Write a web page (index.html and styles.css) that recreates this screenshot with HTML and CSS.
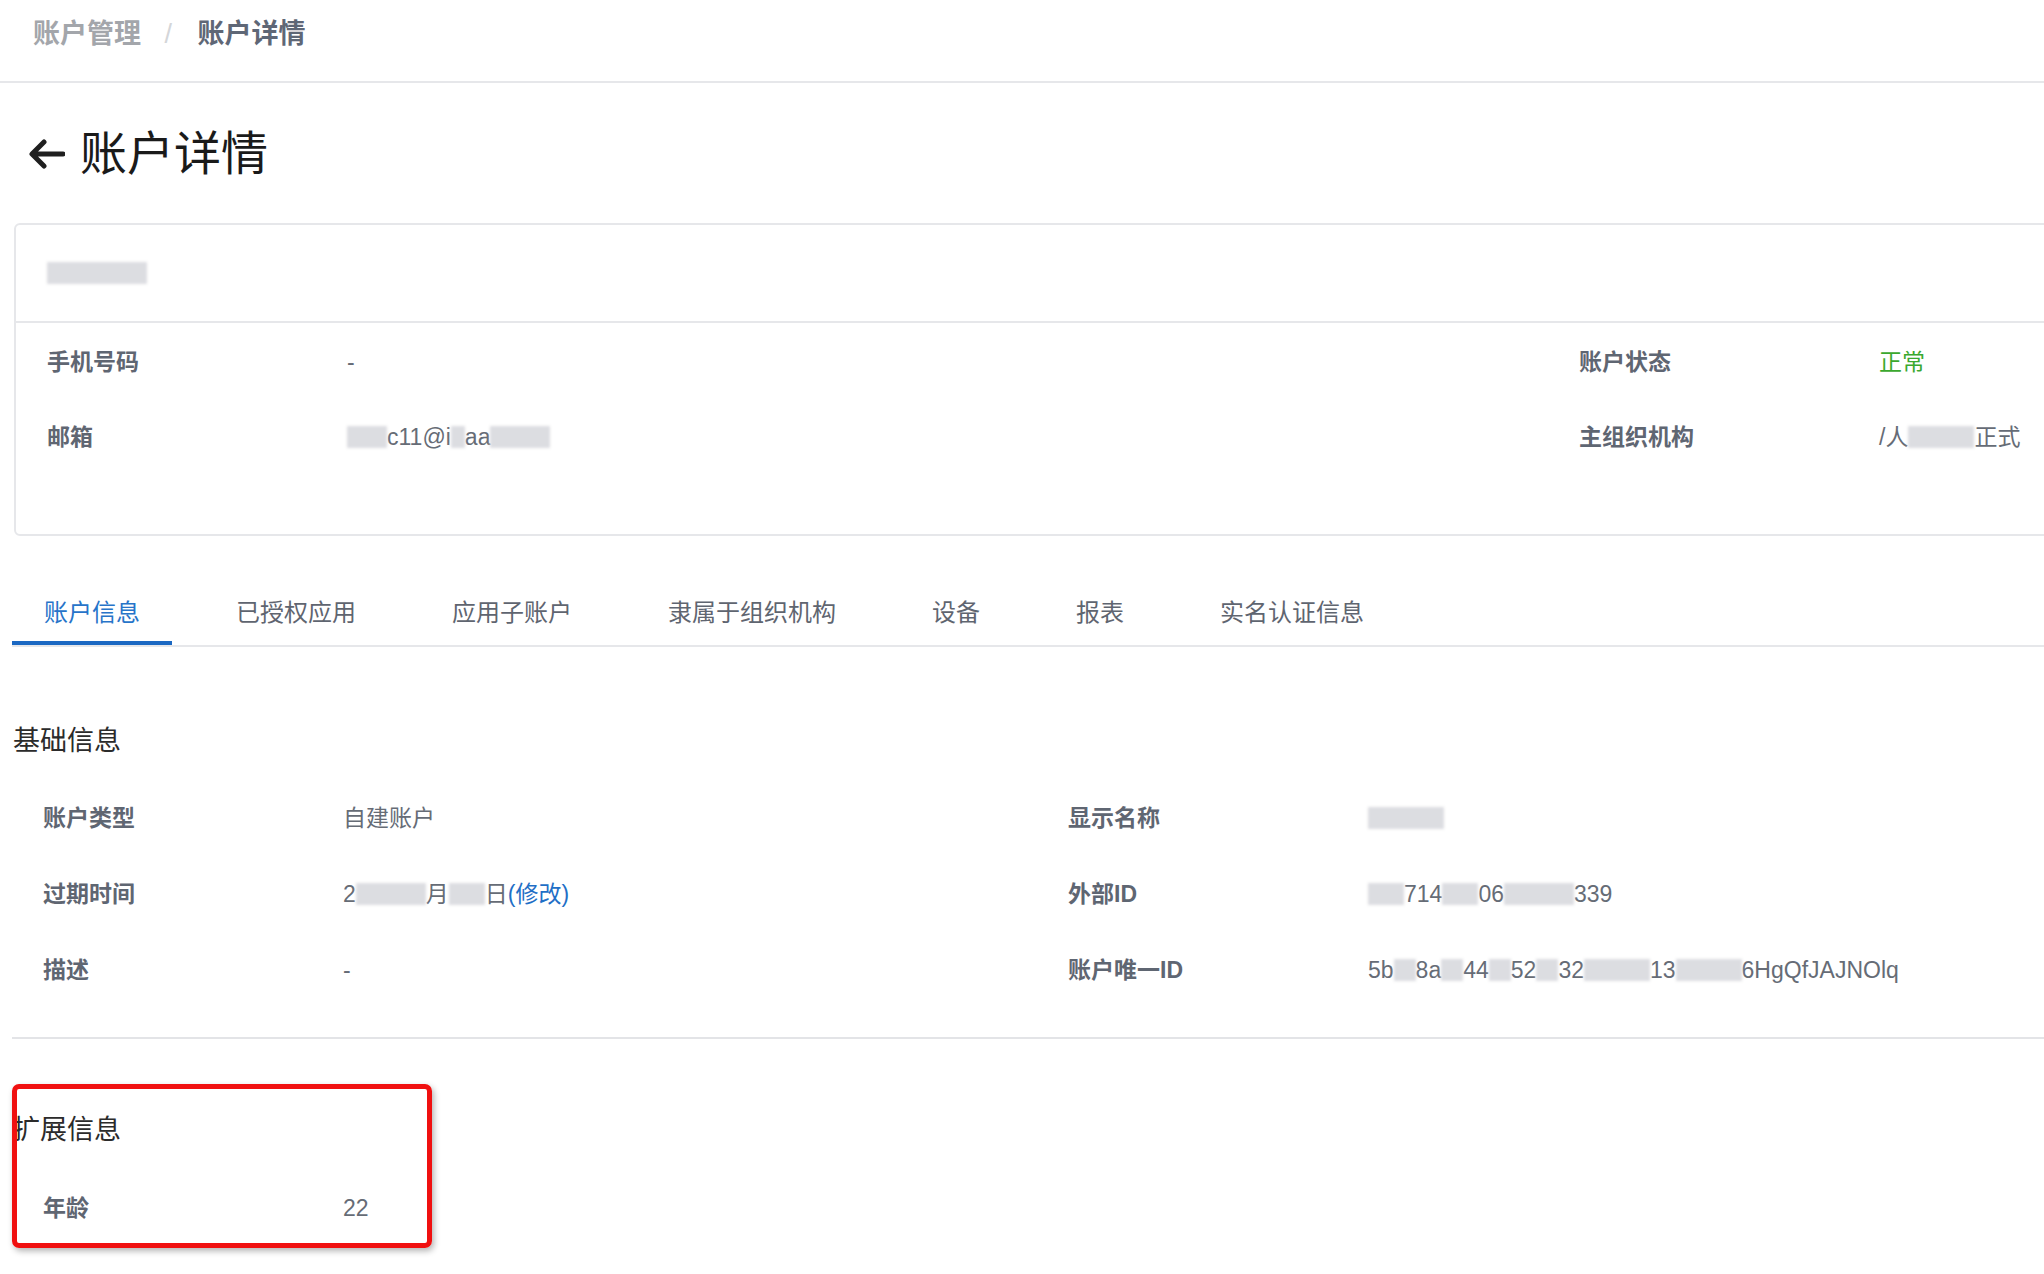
FILE: index.html
```html
<!DOCTYPE html>
<html lang="zh-CN">
<head>
    <meta charset="UTF-8">
    <title>账户详情</title>
    <link rel="stylesheet" href="styles.css">
</head>
<body>
<div class="page">
    <header class="topbar">
        <nav class="breadcrumb">
            <span class="crumb">账户管理</span>
            <span class="sep">/</span>
            <span class="crumb current">账户详情</span>
        </nav>
    </header>

    <div class="title-row">
        <svg class="back-icon" viewBox="0 0 36 30" width="36" height="30">
            <path d="M34 15H4 M15 3L3 15l12 12" fill="none" stroke="#1f1f1f" stroke-width="5" stroke-linecap="round" stroke-linejoin="round"/>
        </svg>
        <h1>账户详情</h1>
    </div>

    <!-- account summary card -->
    <section class="profile-card">
        <div class="profile-head">
            <span class="mask name-mask"></span>
        </div>
        <div class="profile-body">
            <span class="label">手机号码</span>
            <span class="value">-</span>
            <span class="label">账户状态</span>
            <span class="value ok">正常</span>

            <span class="label">邮箱</span>
            <span class="value"><span class="mask w40"></span>c11@i<span class="mask w14"></span>aa<span class="mask w60"></span></span>
            <span class="label">主组织机构</span>
            <span class="value">/人<span class="mask w66"></span>正式</span>
        </div>
    </section>

    <div class="tabs">
        <div class="tab active">账户信息</div>
        <div class="tab">已授权应用</div>
        <div class="tab">应用子账户</div>
        <div class="tab">隶属于组织机构</div>
        <div class="tab">设备</div>
        <div class="tab">报表</div>
        <div class="tab">实名认证信息</div>
    </div>

    <section class="info-block basic">
        <h2>基础信息</h2>
        <div class="info-grid">
            <span class="label">账户类型</span>
            <span class="value">自建账户</span>
            <span class="label">显示名称</span>
            <span class="value"><span class="mask w76"></span></span>

            <span class="label">过期时间</span>
            <span class="value">2<span class="mask w70"></span>月<span class="mask w36"></span>日<a class="link">(修改)</a></span>
            <span class="label">外部ID</span>
            <span class="value"><span class="mask w36"></span>714<span class="mask w36"></span>06<span class="mask w70"></span>339</span>

            <span class="label">描述</span>
            <span class="value">-</span>
            <span class="label">账户唯一ID</span>
            <span class="value">5b<span class="mask w22"></span>8a<span class="mask w22"></span>44<span class="mask w22"></span>52<span class="mask w22"></span>32<span class="mask w66"></span>13<span class="mask w66"></span>6HgQfJAJNOlq</span>
        </div>
    </section>

    <section class="info-block ext">
        <h2>扩展信息</h2>
        <div class="info-grid">
            <span class="label">年龄</span>
            <span class="value">22</span>
        </div>
        <div class="highlight"></div>
    </section>
</div>
</body>
</html>
```

FILE: styles.css
```css
/* General styling */
html, body {
    margin: 0;
    overflow: hidden;
}

body {
    font-family: "Liberation Sans", "Noto Sans CJK SC", sans-serif;
    background-color: #fff;
    color: #333;
    min-height: 100vh;
}

.page {
    width: 2140px;
    min-height: 1274px;
    padding-left: 12px;
}

/* breadcrumb bar */
.topbar {
    height: 81px;
    margin-left: -12px;
    padding-left: 33px;
    border-bottom: 2px solid #e6e7ea;
}

.breadcrumb {
    line-height: 68px;
    font-size: 27px;
    font-weight: 600;
}

.crumb {
    color: #a3a6ab;
}

.crumb.current {
    color: #5f6776;
}

.sep {
    color: #d4d6d9;
    font-weight: 400;
    margin: 0 18px 0 16px;
}

/* page title */
.title-row {
    display: flex;
    align-items: center;
    margin-top: 39px;
    height: 64px;
}

.back-icon {
    margin-left: 17px;
    margin-right: 15px;
}

h1 {
    margin: 0;
    font-size: 47px;
    font-weight: 400;
    color: #1a1a1a;
    line-height: 64px;
}

/* summary card */
.profile-card {
    margin: 37px 0 0 2px;
    border: 2px solid #e6e7ea;
    border-radius: 6px;
}

.profile-head {
    height: 96px;
    display: flex;
    align-items: center;
    padding-left: 31px;
    border-bottom: 2px solid #e6e7ea;
}

.name-mask {
    width: 100px;
    height: 20px;
}

.profile-body {
    display: grid;
    grid-template-columns: 300px 1232px 300px 1fr;
    row-gap: 35px;
    padding: 19px 0 77px 31px;
}

.label {
    font-size: 23px;
    font-weight: 700;
    color: #5f6672;
    line-height: 40px;
}

.value {
    font-size: 23px;
    color: #666c76;
    line-height: 40px;
    white-space: nowrap;
}

.value.ok {
    color: #3ba82e;
}

.mask {
    display: inline-block;
    height: 22px;
    vertical-align: -3px;
    background-color: #dcdde1;
    filter: blur(1.5px);
}

.w14 { width: 14px; }
.w22 { width: 22px; }
.w36 { width: 36px; }
.w40 { width: 40px; }
.w60 { width: 60px; }
.w66 { width: 66px; }
.w70 { width: 70px; }
.w76 { width: 76px; }

.link {
    color: #1f6fc6;
    cursor: pointer;
}

/* tabs */
.tabs {
    display: flex;
    gap: 32px;
    margin-top: 57px;
    border-bottom: 2px solid #e6e7ea;
}

.tab {
    position: relative;
    padding: 0 32px 12px;
    font-size: 24px;
    line-height: 40px;
    color: #5f6570;
}

.tab.active {
    color: #2774c9;
}

.tab.active::after {
    content: "";
    position: absolute;
    left: 0;
    right: 0;
    bottom: 0;
    height: 4px;
    background-color: #1b68c2;
}

/* info sections */
.info-block h2 {
    margin: 0;
    padding-left: 1px;
    font-size: 27px;
    font-weight: 400;
    line-height: 40px;
    color: #2b2b2b;
}

.info-grid {
    display: grid;
    grid-template-columns: 300px 725px 300px 1fr;
    row-gap: 36px;
    padding-left: 31px;
    margin-top: 37px;
}

.basic {
    margin-top: 74px;
    padding-bottom: 47px;
    border-bottom: 2px solid #e3e4e7;
}

.ext {
    position: relative;
    margin-top: 71px;
}

.ext .info-grid {
    margin-top: 38px;
}

/* red annotation box */
.highlight {
    position: absolute;
    left: 0;
    top: -26px;
    width: 410px;
    height: 154px;
    border: 5px solid #f01010;
    border-radius: 7px;
    box-shadow: 2px 3px 6px rgba(0, 0, 0, 0.3);
}
```
